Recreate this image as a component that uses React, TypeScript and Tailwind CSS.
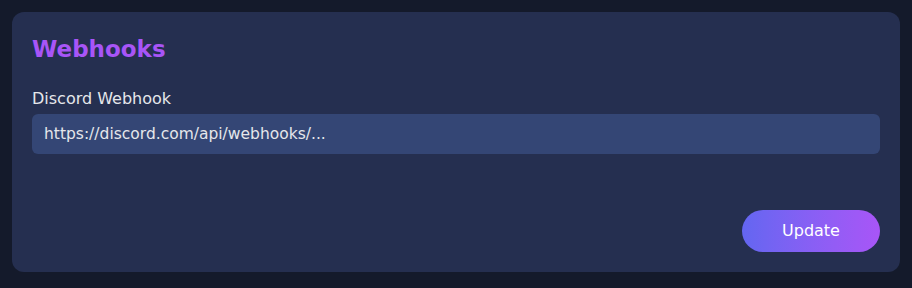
export default function App() {
  return (
    <div className="min-h-[288px] w-full bg-[#141a2b] p-3 font-['DejaVu_Sans',sans-serif]">
      <div className="flex h-[260px] flex-col rounded-xl bg-[#252f50] px-5 pt-[21px] pb-5">
        <h2 className="text-[23px] font-bold leading-8 text-[#a855f7]">Webhooks</h2>

        <div className="mt-[24px] flex flex-col">
          <label className="text-[16px] leading-5 text-[#e5e7eb]">Discord Webhook</label>
          <input
            type="text"
            defaultValue="https://discord.com/api/webhooks/..."
            className="mt-[5px] h-10 w-full rounded-md bg-[#344675] px-3 text-[15.5px] text-[#e5e7eb] outline-none"
          />
        </div>

        <div className="mt-auto flex justify-end">
          <button className="h-[42px] w-[138px] rounded-full bg-gradient-to-r from-[#6366f1] to-[#a855f7] text-base text-white">
            Update
          </button>
        </div>
      </div>
    </div>
  );
}
